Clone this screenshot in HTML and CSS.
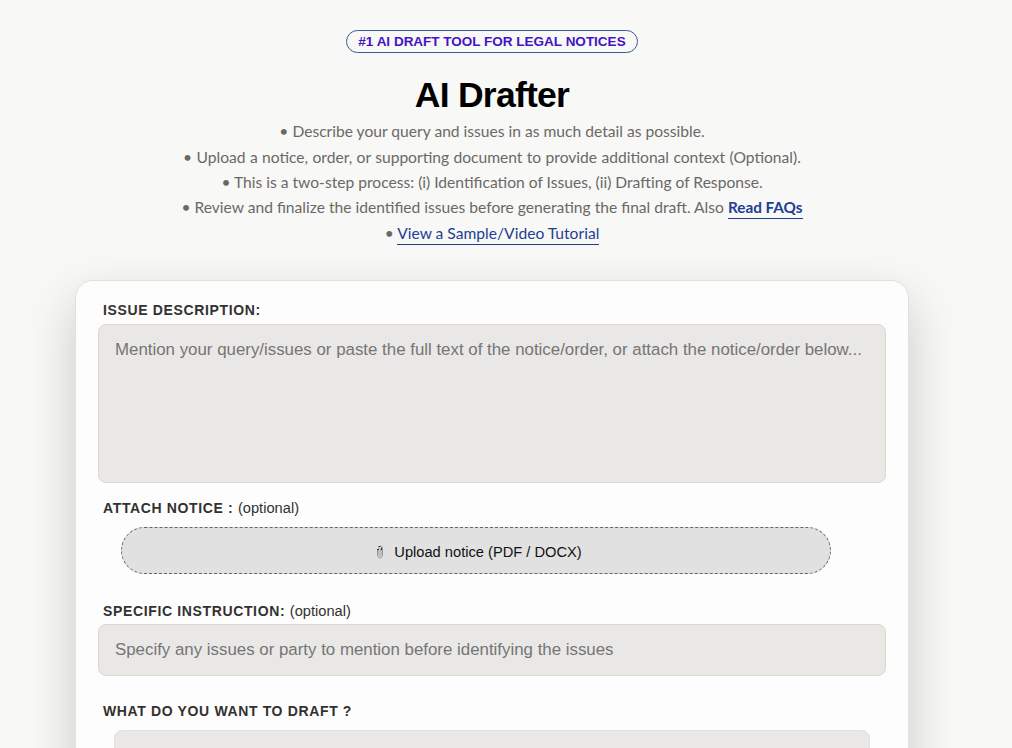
FILE: index.html
```html
<!DOCTYPE html>
<html lang="en">
<head>
<meta charset="utf-8">
<title>AI Drafter</title>
<link rel="stylesheet" href="styles.css">
</head>
<body>
<main class="page">
  <header class="hero">
    <div class="badge">#1 AI DRAFT TOOL FOR LEGAL NOTICES</div>
    <h1 class="title">AI Drafter</h1>
    <div class="notes">
      <p class="note">• Describe your query and issues in as much detail as possible.</p>
      <p class="note wide">• Upload a notice, order, or supporting document to provide additional context (Optional).</p>
      <p class="note">• This is a two-step process: (i) Identification of Issues, (ii) Drafting of Response.</p>
      <p class="note">• Review and finalize the identified issues before generating the final draft. Also <a class="link strong" href="#">Read FAQs</a></p>
      <p class="note">• <a class="link" href="#">View a Sample/Video Tutorial</a></p>
    </div>
  </header>
  <form class="card">
    <label class="label" for="issue">ISSUE DESCRIPTION:</label>
    <textarea class="field issue" id="issue" placeholder="Mention your query/issues or paste the full text of the notice/order, or attach the notice/order below..."></textarea>
    <div class="label attach">ATTACH NOTICE : <span class="optional">(optional)</span></div>
    <button class="upload" type="button">
      <svg class="clip" viewBox="0 0 8 14" fill="none">
        <path d="M1.5 4.5V10.5C1.5 13.8 6.5 13.8 6.5 10.5V3C6.5.5 2.8.5 2.8 3V9.7C2.8 11.5 5 11.5 5 9.7V4.5" stroke="#9a9798"/>
        <path d="M1 4.5H3M2.5 1.5H4.5M5.5 2.5V4M4.5 4.5H6" stroke="#3c3034"/>
      </svg>
      <span>Upload notice (PDF / DOCX)</span>
    </button>
    <label class="label instruction" for="specific">SPECIFIC INSTRUCTION: <span class="optional">(optional)</span></label>
    <input class="field specific" id="specific" placeholder="Specify any issues or party to mention before identifying the issues">
    <div class="label draft">WHAT DO YOU WANT TO DRAFT ?</div>
    <div class="choice"></div>
  </form>
</main>
</body>
</html>
```
FILE: styles.css
```css
* { box-sizing: border-box; }
body {
  margin: 0;
  height: 748px;
  overflow: hidden;
  background: #f8f8f6;
  font-family: "Liberation Sans", Arial, sans-serif;
}
.page { width: 834px; margin-left: 75px; padding-top: 30px; }
.hero { display: flex; flex-direction: column; align-items: center; height: 250px; }
.badge {
  width: 292px;
  height: 23px;
  border: 1px solid #3b5b95;
  border-radius: 12px;
  color: #4314c6;
  font-size: 13.5px;
  font-weight: 700;
  line-height: 21px;
  text-align: center;
  white-space: nowrap;
}
.title { margin: 21px 0 0; font-size: 35.5px; line-height: 42px; letter-spacing: -0.75px; color: #000; }
.notes { margin-top: 3px; color: #6b6966; font-family: Lato, sans-serif; font-size: 15.62px; text-align: center; }
.note { margin: 0; line-height: 25.4px; white-space: nowrap; }
.wide { padding-top: 1px; line-height: 24.6px; word-spacing: 0.35px; }
.link { color: #1e3f93; text-decoration: none; border-bottom: 1px solid #1e3f93; padding-bottom: 2px; }
.strong { font-size: 15.3px; font-weight: 700; padding-bottom: 1.5px; }
.card {
  display: flex;
  flex-direction: column;
  height: 640px;
  padding: 19px 22px 0;
  background: #fdfdfd;
  border: 1px solid #e5e1d5;
  border-radius: 18px;
  box-shadow: 0 20px 50px rgba(0, 0, 0, .19);
}
.label { margin-left: 5px; height: 20px; color: #33312f; font-size: 14px; font-weight: 700; line-height: 20px; letter-spacing: 0.64px; white-space: nowrap; }
.optional { font-size: 14.67px; font-weight: 400; letter-spacing: 0; }
.field {
  width: 788px;
  border: 1px solid #ddd8c9;
  border-radius: 8px;
  background: #e9e8e6;
  font: 16.86px/20px "Liberation Sans", Arial, sans-serif;
  padding: 15px 16px;
  resize: none;
  outline: none;
}
.field::placeholder { color: #757575; }
.issue { height: 159px; margin-top: 4px; overflow: hidden; white-space: nowrap; }
.attach { margin-top: 15px; }
.upload {
  display: flex;
  align-items: center;
  justify-content: center;
  gap: 10px;
  width: 710px;
  height: 47px;
  margin: 9px 0 0 23px;
  padding: 2px 0 0 6px;
  border: 1px dashed #666;
  border-radius: 24px;
  background: #e1e1e1;
  color: #111;
  font: 14.67px/20px "Liberation Sans", Arial, sans-serif;
}
.clip { width: 8px; height: 14px; }
.instruction { margin-top: 27px; }
.specific { height: 52px; margin-top: 3px; }
.draft { margin-top: 25px; }
.choice { width: 756px; height: 60px; margin: 9px 0 0 16px; border: 1px solid #e3e1da; border-radius: 8px; background: #e9e8e6; flex: none; }
```
